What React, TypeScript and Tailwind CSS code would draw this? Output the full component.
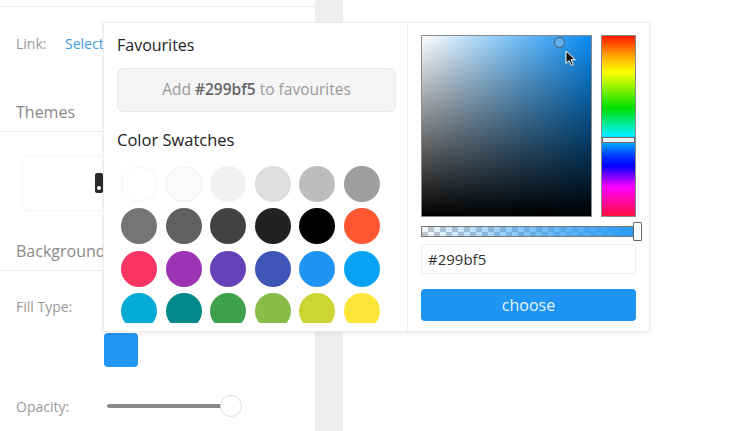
const swatches = [
  "bg-[#ffffff] border border-[#f2f2f2]",
  "bg-[#fafafa] border border-[#eeeeee]",
  "bg-[#f1f1f1]",
  "bg-[#dedede]",
  "bg-[#bdbdbd]",
  "bg-[#9e9e9e]",
  "bg-[#757575]",
  "bg-[#616161]",
  "bg-[#424242]",
  "bg-[#212223]",
  "bg-[#000000]",
  "bg-[#fe5630]",
  "bg-[#f73462]",
  "bg-[#9c33b3]",
  "bg-[#6741b8]",
  "bg-[#3f56b6]",
  "bg-[#1f94f3]",
  "bg-[#08a3f4]",
  "bg-[#05abd5]",
  "bg-[#03898a]",
  "bg-[#3fa04b]",
  "bg-[#88bb47]",
  "bg-[#cdd534]",
  "bg-[#fde53a]",
];

function ColorPopup() {
  return (
    <div className="absolute left-[103px] top-[22px] w-[547px] h-[310px] bg-white border border-[#ececec] shadow-[0_2px_6px_rgba(0,0,0,0.06)] flex">
      <div className="w-[304px] border-r border-[#f0f0f0] pl-[13px] pr-[11px] pt-[11px]">
        <h3 className="text-[16px] leading-[22px] text-[#222]">Favourites</h3>
        <div className="mt-[12px] h-[44px] rounded-[6px] bg-[#f5f5f5] border border-[#e9e9e9] flex items-center justify-center text-[15.5px] text-[#9a9a9a]">
          <span>
            Add <b className="font-semibold text-[#666]">#299bf5</b> to favourites
          </span>
        </div>
        <h3 className="mt-[17px] text-[16.5px] leading-[22px] text-[#222]">Color Swatches</h3>
        <div className="mt-[15px] h-[157px] overflow-hidden pl-[4px]">
          <div className="grid grid-cols-[repeat(6,36px)] gap-x-[8.6px] gap-y-[6.4px]">
            {swatches.map((c, i) => (
              <div key={i} className={`w-[36px] h-[36px] rounded-full ${c}`} />
            ))}
          </div>
        </div>
      </div>

      <div className="flex-1 px-[13px] pt-[12px]">
        <div className="flex gap-[9px] h-[182px]">
          {/* saturation / value area */}
          <div className="relative w-[171px] h-full border border-[#8a8a8a] bg-[#0a8cf2]">
            <div className="absolute inset-0 bg-[linear-gradient(to_right,#ffffff,rgba(255,255,255,0))]" />
            <div className="absolute inset-0 bg-[linear-gradient(to_top,#000000,rgba(0,0,0,0))]" />
            <div className="absolute left-[132px] top-[1px] w-[11px] h-[11px] rounded-full border-[1.5px] border-[#555] bg-[#5eb0f0]" />
            <svg className="absolute left-[143px] top-[14px]" width="12" height="17" viewBox="0 0 12 17">
              <path d="M1 1 L1 13.5 L4 10.5 L6.3 15.5 L8.3 14.6 L6.1 9.7 L10.3 9.7 Z" fill="#111" stroke="#fff" strokeWidth="1" strokeLinejoin="round" />
            </svg>
          </div>
          {/* hue */}
          <div className="relative w-[35px] h-full border border-[#8a8a8a] bg-[linear-gradient(to_bottom,#ff1a00,#ffb000_12%,#ffff00_20%,#00e000_40%,#00f0ff_55%,#0040ff_66%,#0000ff_72%,#ff00ff_84%,#ff1040)]">
            <div className="absolute left-0 right-0 top-[101px] h-[6px] bg-[#e8f2fb] border border-[#6a6a6a]" />
          </div>
        </div>

        {/* alpha */}
        <div className="relative mt-[9px] h-[11px] border border-[#777] bg-[repeating-conic-gradient(#c8c8c8_0_25%,#ffffff_0_50%)] bg-[length:12px_10px]">
          <div className="absolute inset-0 bg-[linear-gradient(to_right,rgba(41,155,245,0.05),rgba(41,155,245,0.6)_50%,#299bf5)]" />
          <div className="absolute left-[211px] top-[-5px] w-[9px] h-[19px] bg-white border border-[#666] rounded-[1px]" />
        </div>

        <div className="mt-[7px] h-[30px] border border-[#ececec] rounded-[3px] flex items-center px-[6px] text-[15px] text-[#333]">
          #299bf5
        </div>

        <button className="mt-[15px] w-full h-[32px] rounded-[4px] bg-[#1e94f3] text-[16px] text-[#e6f3ff] flex items-center justify-center">
          choose
        </button>
      </div>
    </div>
  );
}

function Sidebar() {
  return (
    <div className="w-[315px] shrink-0 bg-white">
      <div className="h-[7px] border-b border-[#ececec]" />
      <div className="h-[73px] flex items-center pl-[16px] text-[14px]">
        <span className="text-[#9a9a9a] w-[49px]">Link:</span>
        <span className="text-[#3d9de2]">Select</span>
      </div>
      <div className="h-[52px] flex items-end pb-[8px] pl-[16px] border-b border-[#ececec]">
        <span className="text-[16px] leading-[22px] text-[#8a8a8a]">Themes</span>
      </div>
      <div className="pt-[23px] px-[22px]">
        <div className="h-[56px] rounded-[6px] border border-[#f6f6f6] flex items-center pl-[72px]">
          <div className="relative w-[8px] h-[20px] rounded-[2px] bg-[#2a2a2a]">
            <div className="absolute left-[2px] bottom-[3px] w-[4px] h-[4px] rounded-full bg-white" />
          </div>
        </div>
      </div>
      <div className="h-[60px] flex items-end pb-[8px] pl-[16px] border-b border-[#ececec]">
        <span className="text-[16px] leading-[22px] text-[#8a8a8a]">Background</span>
      </div>
      <div className="pt-[26px] pl-[16px] h-[62px] text-[14px] leading-[20px] text-[#9a9a9a]">Fill Type:</div>
      <div className="pl-[104px]">
        <div className="w-[34px] h-[34px] rounded-[4px] bg-[#2196f3]" />
      </div>
      <div className="mt-[29px] flex items-center pl-[16px] h-[20px]">
        <span className="w-[91px] text-[14px] text-[#9a9a9a]">Opacity:</span>
        <div className="relative w-[124px] h-[4px] rounded-full bg-[#8a8a8a]">
          <div className="absolute left-[113px] top-[-9px] w-[22px] h-[22px] rounded-full bg-white border border-[#dcdcdc]" />
        </div>
      </div>
    </div>
  );
}

export default function App() {
  return (
    <div className="relative w-[748px] h-[431px] overflow-hidden bg-white flex font-['Open_Sans',sans-serif]">
      <Sidebar />
      <div className="w-[28px] shrink-0 bg-[#efefef]" />
      <div className="flex-1 bg-white" />
      <ColorPopup />
    </div>
  );
}
